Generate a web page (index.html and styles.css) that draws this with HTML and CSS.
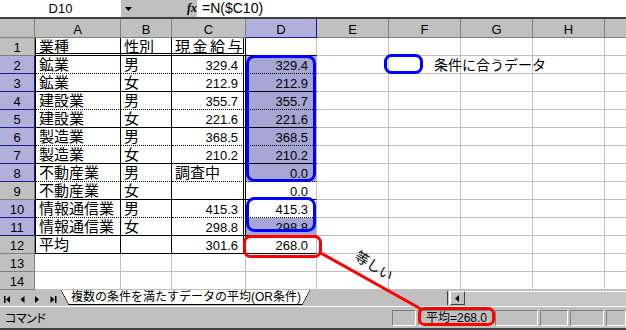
FILE: index.html
```html
<!DOCTYPE html>
<html lang="ja">
<head>
<meta charset="utf-8">
<title>Excel</title>
<link rel="stylesheet" href="styles.css">
</head>
<body>
<div class="app">
  <div class="formula-bar">
    <div class="namebox">D10</div>
    <div class="fb-mid">
      <svg class="dd" width="8" height="5" viewBox="0 0 8 5"><path d="M0 0H7L3.5 4Z" fill="#000"/></svg>
      <span class="fx">fx</span>
    </div>
    <div class="formula">=N($C10)</div>
  </div>

  <div class="sheet">
    <div class="ch"></div><div class="ch">A</div><div class="ch">B</div><div class="ch">C</div><div class="ch sel">D</div><div class="ch">E</div><div class="ch">F</div><div class="ch">G</div><div class="ch">H</div><div class="ch"></div>

    <div class="rh">1</div><div class="c ta jp bdbl">業種</div><div class="c tb jp bdbl">性別</div><div class="c tc jp bdbl spread">現金給与</div><div class="c bs"></div><div class="c"></div><div class="c"></div><div class="c"></div><div class="c"></div><div class="c"></div>

    <div class="rh sel">2</div><div class="c ta jp bd">鉱業</div><div class="c tb jp bd">男</div><div class="c tc r bd">329.4</div><div class="c d r hl bd">329.4</div><div class="c"></div><div class="c"></div><div class="c"></div><div class="c"></div><div class="c"></div>

    <div class="rh sel">3</div><div class="c ta jp bs">鉱業</div><div class="c tb jp bs">女</div><div class="c tc r bs">212.9</div><div class="c d r hl bs">212.9</div><div class="c"></div><div class="c"></div><div class="c"></div><div class="c"></div><div class="c"></div>

    <div class="rh sel">4</div><div class="c ta jp bd">建設業</div><div class="c tb jp bd">男</div><div class="c tc r bd">355.7</div><div class="c d r hl bd">355.7</div><div class="c"></div><div class="c"></div><div class="c"></div><div class="c"></div><div class="c"></div>

    <div class="rh sel">5</div><div class="c ta jp bs">建設業</div><div class="c tb jp bs">女</div><div class="c tc r bs">221.6</div><div class="c d r hl bs">221.6</div><div class="c"></div><div class="c"></div><div class="c"></div><div class="c"></div><div class="c"></div>

    <div class="rh sel">6</div><div class="c ta jp bd">製造業</div><div class="c tb jp bd">男</div><div class="c tc r bd">368.5</div><div class="c d r hl bd">368.5</div><div class="c"></div><div class="c"></div><div class="c"></div><div class="c"></div><div class="c"></div>

    <div class="rh sel">7</div><div class="c ta jp bs">製造業</div><div class="c tb jp bs">女</div><div class="c tc r bs">210.2</div><div class="c d r hl bs">210.2</div><div class="c"></div><div class="c"></div><div class="c"></div><div class="c"></div><div class="c"></div>

    <div class="rh sel">8</div><div class="c ta jp bd">不動産業</div><div class="c tb jp bd">男</div><div class="c tc jp bd">調査中</div><div class="c d r hl bd">0.0</div><div class="c"></div><div class="c"></div><div class="c"></div><div class="c"></div><div class="c"></div>

    <div class="rh">9</div><div class="c ta jp bs">不動産業</div><div class="c tb jp bs">女</div><div class="c tc bs"></div><div class="c d r bs">0.0</div><div class="c"></div><div class="c"></div><div class="c"></div><div class="c"></div><div class="c"></div>

    <div class="rh sel">10</div><div class="c ta jp bd">情報通信業</div><div class="c tb jp bd">男</div><div class="c tc r bd">415.3</div><div class="c d r act bd">415.3</div><div class="c"></div><div class="c"></div><div class="c"></div><div class="c"></div><div class="c"></div>

    <div class="rh sel">11</div><div class="c ta jp bs">情報通信業</div><div class="c tb jp bs">女</div><div class="c tc r bs">298.8</div><div class="c d r hl bs">298.8</div><div class="c"></div><div class="c"></div><div class="c"></div><div class="c"></div><div class="c"></div>

    <div class="rh">12</div><div class="c ta jp bs">平均</div><div class="c tb bs"></div><div class="c tc r bs">301.6</div><div class="c d r bs">268.0</div><div class="c"></div><div class="c"></div><div class="c"></div><div class="c"></div><div class="c"></div>

    <div class="rh">13</div><div class="c"></div><div class="c"></div><div class="c"></div><div class="c"></div><div class="c"></div><div class="c"></div><div class="c"></div><div class="c"></div><div class="c"></div>

    <div class="rh">14</div><div class="c"></div><div class="c"></div><div class="c"></div><div class="c"></div><div class="c"></div><div class="c"></div><div class="c"></div><div class="c"></div><div class="c"></div>
  </div>

  <div class="tabbar">
    <svg class="tabnav" width="61" height="16" viewBox="0 0 61 16">
      <rect x="4" y="6" width="1.5" height="7" fill="#000"/>
      <path d="M6 9.5L10 6V13Z" fill="#000"/>
      <path d="M20.5 9.5L24.5 6V13Z" fill="#000"/>
      <path d="M35 6L39 9.5L35 13Z" fill="#000"/>
      <path d="M50.5 6L54.5 9.5L50.5 13Z" fill="#000"/>
      <rect x="55" y="6" width="1.5" height="7" fill="#000"/>
    </svg>
    <div class="tab">複数の条件を満たすデータの平均(OR条件)</div>
    <div class="tabfill"></div>
    <div class="split"></div>
    <div class="sbtn">
      <svg width="5" height="7" viewBox="0 0 5 7"><path d="M4 0V7L0 3.5Z" fill="#000"/></svg>
    </div>
    <div class="track"></div>
  </div>

  <div class="status">
    <div class="cmd">コマンド</div>
    <div class="p p1"></div>
    <div class="p p2">平均=268.0</div>
    <div class="p p3"></div>
    <div class="p p4"></div>
    <div class="p p5"></div>
    <div class="p p6"></div>
  </div>

  <svg class="overlay" width="626" height="330" viewBox="0 0 626 330">
    <rect x="247.5" y="56.5" width="67" height="124" rx="7" fill="none" stroke="#0000ff" stroke-width="3"/>
    <rect x="247.5" y="198.5" width="67" height="32" rx="7" fill="none" stroke="#0000ff" stroke-width="3"/>
    <rect x="385.5" y="55.5" width="36" height="17" rx="6" fill="none" stroke="#0000ff" stroke-width="3"/>
    <text class="legend" x="434" y="70">条件に合うデータ</text>
    <rect x="244.5" y="236.5" width="76" height="20" rx="6" fill="none" stroke="#ff0000" stroke-width="3"/>
    <line x1="319" y1="252" x2="421" y2="309" stroke="#ff0000" stroke-width="3"/>
    <rect x="419.5" y="308.5" width="74" height="16" rx="5" fill="none" stroke="#ff0000" stroke-width="3"/>
    <text class="eq" x="374" y="271" transform="rotate(32 374 266)">等しい</text>
  </svg>
</div>
</body>
</html>
```

FILE: styles.css
```css
html, body {
  margin: 0;
  padding: 0;
}

body {
  width: 626px;
  height: 330px;
  overflow: hidden;
  background: #fff;
  color: #000;
  font-family: "Liberation Sans", "Noto Sans CJK JP", sans-serif;
  font-size: 13px;
}

.app {
  position: relative;
  width: 626px;
  height: 330px;
  overflow: hidden;
  display: flex;
  flex-direction: column;
}

/* ---------- formula bar ---------- */
.formula-bar {
  flex: none;
  display: flex;
  height: 17px;
  border-bottom: 2px solid #404040;
  background: #fff;
}

.namebox {
  width: 121px;
  text-align: center;
  line-height: 17px;
  font-size: 13px;
}

.fb-mid {
  width: 76px;
  background: #c0c0c0;
  display: flex;
  align-items: center;
}

.dd {
  margin-left: 4px;
  margin-top: 1px;
}

.fx {
  margin-left: 54px;
  font-family: "Liberation Serif", serif;
  font-style: italic;
  font-weight: bold;
  font-size: 12px;
  line-height: 17px;
}

.formula {
  flex: 1;
  padding-left: 5px;
  line-height: 17px;
  font-size: 14px;
}

/* ---------- sheet grid ---------- */
.sheet {
  flex: none;
  display: grid;
  grid-template-columns: 35px 86px 51px 74px 71px 72px 72px 72px 72px 72px;
  grid-template-rows: 19px repeat(14, 18px);
  height: 271px;
  overflow: hidden;
}

.sheet > div {
  box-sizing: border-box;
  overflow: hidden;
  white-space: nowrap;
}

.ch,
.rh {
  background: #c0c0c0;
  border-right: 1px solid #808080;
  border-bottom: 1px solid #808080;
  text-align: center;
  line-height: 14px;
}

.ch {
  padding-top: 4px;
}

.rh {
  padding-top: 3px;
}

.ch.sel,
.rh.sel {
  background: #b0b0da;
  border-color: #1a1a8c;
}

.c {
  border-right: 1px solid #c0c0c0;
  border-bottom: 1px solid #c0c0c0;
  padding: 3px 3px 0 3px;
  line-height: 14px;
}

.jp {
  font-size: 15px;
  padding-top: 2px;
}

.spread {
  letter-spacing: 2.5px;
}

.r {
  text-align: right;
}

.tc.r {
  padding-right: 5px;
}

.d.r {
  padding-right: 8px;
}

.ta {
  border-left: 1px solid #000;
  border-right: 1px solid #000;
}

.tb {
  border-right: 1px solid #000;
}

.tc {
  border-right: 3px double #000;
}

.bs {
  border-bottom: 1px solid #000;
}

.bd {
  border-bottom: 1px dotted #000;
}

.bdbl {
  border-bottom: 3px double #000;
}

.hl {
  background: #a6a6d4;
}

.act {
  background: #fff;
}

/* ---------- sheet tabs ---------- */
.tabbar {
  flex: none;
  display: flex;
  height: 16px;
  background: #c0c0c0;
}

.tabnav {
  flex: none;
  display: block;
}

.tab {
  position: relative;
  flex: none;
  box-sizing: border-box;
  height: 15px;
  padding: 0 9px 0 10px;
  background: #fff;
  border-bottom: 1px solid #000;
  font-size: 12px;
  line-height: 14px;
}

.tab::before,
.tab::after {
  content: "";
  position: absolute;
  top: 0;
  bottom: -1px;
  width: 8px;
}

.tab::before {
  left: 0;
  background: linear-gradient(to top right, #c0c0c0 calc(50% - 0.6px), #000 50%, #fff calc(50% + 0.6px));
}

.tab::after {
  right: 0;
  background: linear-gradient(to bottom right, #fff calc(50% - 0.6px), #000 50%, #c0c0c0 calc(50% + 0.6px));
}

.tabfill {
  flex: 1;
}

.split {
  flex: none;
  width: 1px;
  margin-top: 1px;
  height: 14px;
  border-left: 1px solid #404040;
  border-right: 1px solid #fff;
}

.sbtn {
  flex: none;
  box-sizing: border-box;
  width: 15px;
  height: 14px;
  margin-top: 1px;
  border-top: 1px solid #fff;
  border-left: 1px solid #fff;
  border-right: 1px solid #404040;
  border-bottom: 1px solid #404040;
  display: flex;
  align-items: center;
  justify-content: center;
}

.sbtn svg {
  display: block;
}

.track {
  flex: none;
  width: 161px;
  height: 14px;
  margin-top: 1px;
  box-sizing: border-box;
  border-top: 1px solid #fff;
  background: #c8c8c8;
}

/* ---------- status bar ---------- */
.status {
  flex: none;
  display: flex;
  align-items: center;
  gap: 2px;
  height: 21px;
  border-top: 1px solid #fff;
  border-bottom: 2px solid #404040;
  background: #c0c0c0;
}

.cmd {
  flex: 1;
  padding-left: 5px;
  font-size: 12px;
  font-feature-settings: "palt";
  letter-spacing: -0.5px;
}

.p {
  flex: none;
  box-sizing: border-box;
  height: 16px;
  border-top: 1px solid #808080;
  border-left: 1px solid #808080;
  border-bottom: 1px solid #fff;
  border-right: 1px solid #fff;
  font-size: 12px;
  line-height: 14px;
  padding-left: 7px;
}

.p1 { width: 24px; }
.p2 { width: 75px; }
.p3 { width: 43px; }
.p4 { width: 28px; }
.p5 { width: 34px; }
.p6 { width: 20px; }

/* ---------- annotations ---------- */
.overlay {
  position: absolute;
  left: 0;
  top: 0;
  pointer-events: none;
}

.legend {
  font-family: "Noto Sans CJK JP", sans-serif;
  font-size: 14px;
  fill: #000;
}

.eq {
  font-family: "Noto Sans CJK JP", sans-serif;
  font-size: 14px;
  text-anchor: middle;
  fill: #000;
}
```
